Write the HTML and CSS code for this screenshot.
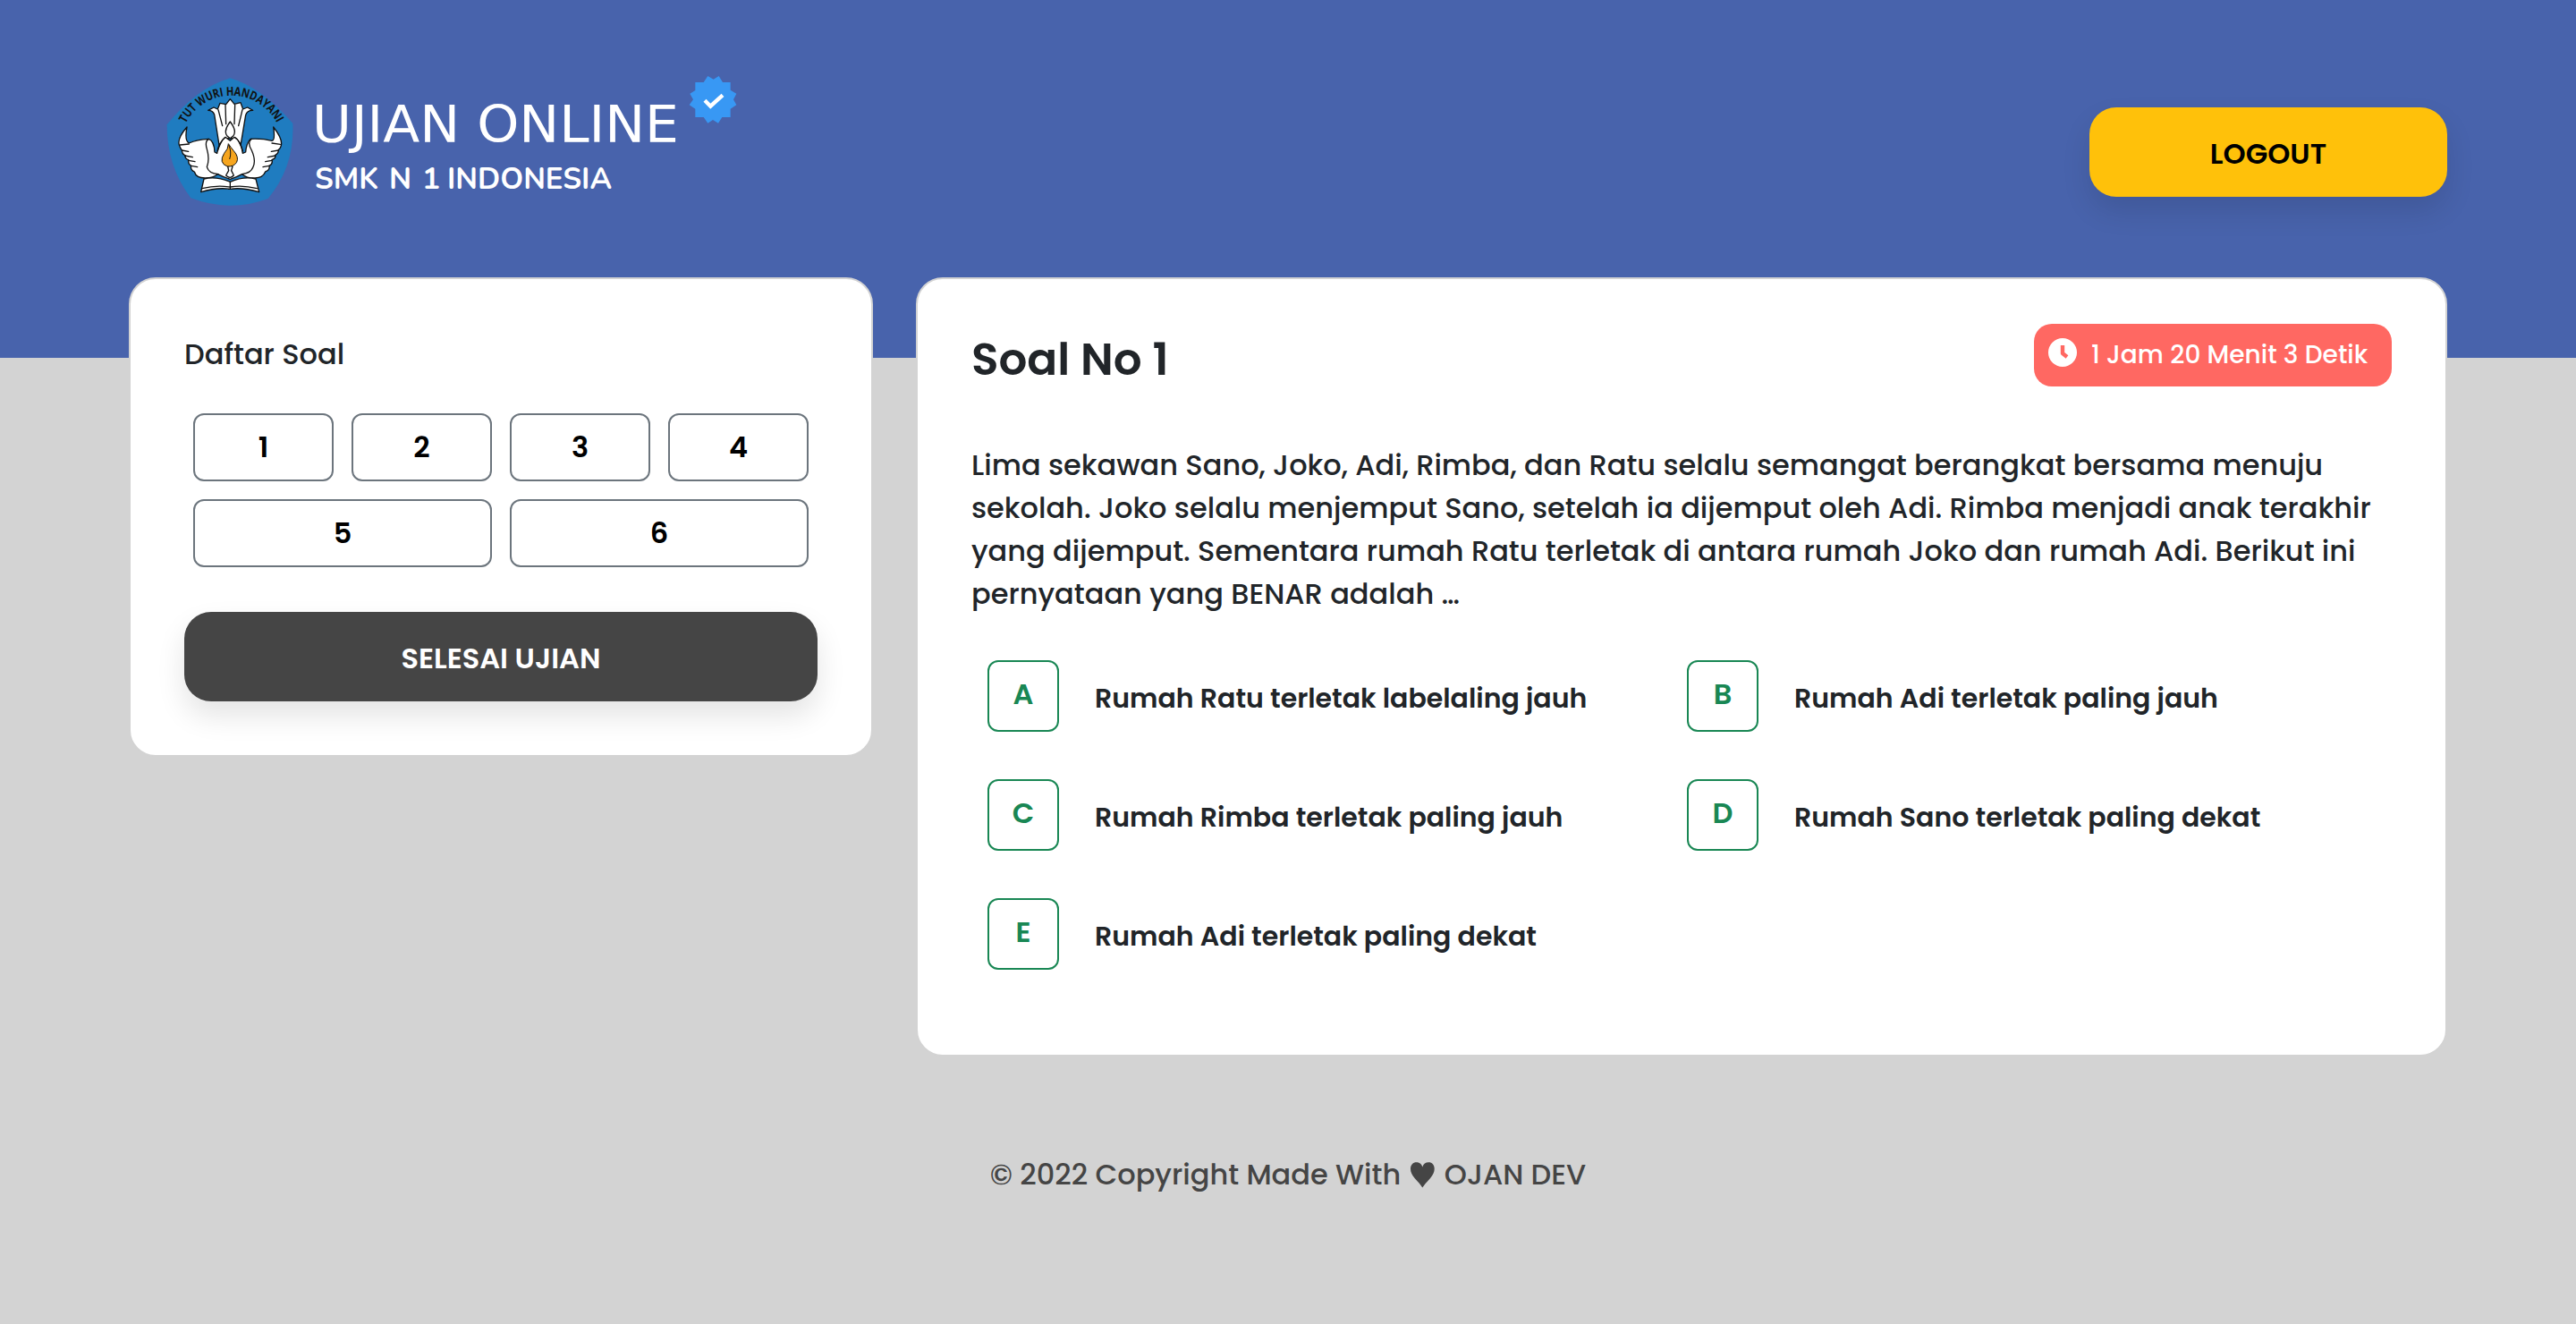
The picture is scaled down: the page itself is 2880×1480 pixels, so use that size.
FILE: index.html
```html
<!DOCTYPE html>
<html lang="id">
<head>
<meta charset="utf-8">
<title>Ujian Online - SMK N 1 Indonesia</title>
<link rel="stylesheet" href="styles.css">
</head>
<body>
<header class="header">
  <svg class="brand" width="660" height="170" viewBox="0 0 660 170" role="img" aria-label="Ujian Online SMK N 1 Indonesia">
    <!-- school emblem -->
    <g transform="scale(.33333)">
      <path fill="#1f7cc0" d="M262 52Q366 82 472 204Q478 350 389 456Q262 504 130 454Q50 350 50 208Q150 84 262 52Z"/>
      <defs><path id="motto" d="M113 204A172 172 0 0 1 424 214"/></defs>
      <text class="motto"><textPath href="#motto" textLength="376" lengthAdjust="spacingAndGlyphs">TUT WURI HANDAYANI</textPath></text>
      <g fill="#fff" stroke="#111" stroke-width="4" stroke-linejoin="round" stroke-linecap="round">
        <path d="M188 160L207 150L220 156L228 136L248 140L262 122L276 139L297 134L305 156L320 150L338 160Q318 160 314 176L297 278Q262 230 225 276L209 174Q204 160 188 160Z"/>
        <path fill="none" d="M222 158L236 212M246 142L248 206M278 142L276 206M303 158L290 212"/>
        <path d="M117 216Q84 254 91 276Q96 290 100 293Q101 308 111 311Q110 322 122 326Q120 340 131 346Q128 360 142 366Q148 388 180 387Q206 386 220 374Q240 384 262 391Q284 384 302 374Q318 388 346 387Q372 386 380 366Q396 360 393 346Q406 340 402 326Q416 322 413 310Q424 306 424 292Q432 288 434 272Q434 250 407 216Q414 260 402 262Q370 254 330 256Q316 272 314 300L304 304Q300 262 276 250L262 262L246 250Q222 270 218 304L210 300Q208 262 190 256Q150 258 124 270Q108 262 117 216Z"/>
        <path fill="none" d="M190 256Q176 264 184 290Q194 324 184 350Q190 372 222 374M334 256Q318 268 334 294Q350 330 338 352Q332 370 302 374M94 276L124 273M100 294L122 298M110 312L136 317M122 328L144 332M131 346L152 350M430 274L402 270M424 294L400 298M414 312L388 317M402 328L380 332M393 346L372 350M220 296Q232 260 244 252M304 296Q292 260 280 252"/>
        <path d="M262 198Q238 230 252 246L262 254L272 246Q286 230 262 198Z"/>
        <path d="M254 348Q262 342 270 348L266 362L274 378Q262 392 248 378L257 362Z"/>
        <path d="M174 390Q216 380 262 400Q308 380 348 390L359 434Q304 418 262 424Q216 418 164 434Z"/>
        <path fill="none" d="M262 400V424M168 422Q214 410 262 417Q304 410 352 422"/>
      </g>
      <path fill="#f6a51e" stroke="#111" stroke-width="3" d="M256 272Q256 290 242 304Q222 336 252 348Q274 350 284 334Q292 316 274 296Q264 284 256 272Z"/>
      <path fill="none" stroke="#111" stroke-width="3" d="M257 276Q268 300 260 324"/>
    </g>
    <text class="brand-name" x="179" y="89" textLength="410" lengthAdjust="spacingAndGlyphs">UJIAN ONLINE</text>
    <text class="brand-school" y="141"><tspan x="182" textLength="71" lengthAdjust="spacingAndGlyphs">SMK</tspan> <tspan x="265">N</tspan> <tspan x="302">1</tspan> <tspan x="330" textLength="184" lengthAdjust="spacingAndGlyphs">INDONESIA</tspan></text>
    <!-- verified badge -->
    <g transform="translate(160 0) scale(.33333)">
      <path fill="#3898f4" d="M1384 45L1403 56L1421 45L1434 66H1460V92L1480 104L1470 124L1480 142L1460 155V183H1432L1419 203L1401 192L1384 203L1370 183H1342V155L1322 142L1335 124L1324 104L1342 93V66H1370Z"/>
      <path fill="none" stroke="#fff" stroke-width="13" d="M1374 127L1393 146L1434 109"/>
    </g>
  </svg>
  <a class="btn btn-logout">LOGOUT</a>
</header>
<main class="content">
  <aside class="card list-card">
    <h2 class="list-title">Daftar Soal</h2>
    <nav class="numbers">
      <a class="number">1</a><a class="number">2</a><a class="number">3</a><a class="number">4</a>
      <a class="number wide">5</a><a class="number wide">6</a>
    </nav>
    <a class="btn btn-finish">SELESAI UJIAN</a>
  </aside>
  <section class="card question-card">
    <div class="question-head">
      <h1 class="question-title">Soal No 1</h1>
      <div class="timer">
        <svg width="32" height="32" viewBox="0 0 32 32"><circle cx="16" cy="16" r="16" fill="#fff"/><path d="M16 8v9l5 4" fill="none" stroke="#ff6862" stroke-width="4.4" stroke-linejoin="round"/></svg>
        <span>1 Jam 20 Menit 3 Detik</span>
      </div>
    </div>
    <p class="question">Lima sekawan Sano, Joko, Adi, Rimba, dan Ratu selalu semangat berangkat bersama menuju sekolah. Joko selalu menjemput Sano, setelah ia dijemput oleh Adi. Rimba menjadi anak terakhir yang dijemput. Sementara rumah Ratu terletak di antara rumah Joko dan rumah Adi. Berikut ini pernyataan yang BENAR adalah …</p>
    <div class="options">
      <label class="option"><span class="key">A</span><span class="answer">Rumah Ratu terletak labelaling jauh</span></label>
      <label class="option"><span class="key">B</span><span class="answer">Rumah Adi terletak paling jauh</span></label>
      <label class="option"><span class="key">C</span><span class="answer">Rumah Rimba terletak paling jauh</span></label>
      <label class="option"><span class="key">D</span><span class="answer">Rumah Sano terletak paling dekat</span></label>
      <label class="option"><span class="key">E</span><span class="answer">Rumah Adi terletak paling dekat</span></label>
    </div>
  </section>
</main>
<footer class="footer">© 2022 Copyright Made With <svg class="heart" width="32" height="32" viewBox="0 0 32 32"><path fill="#454545" d="M16.3 31.5Q13 26.500 8 21.500C4.500 17.500 3 14 3 10.500C3 6 6 3.300 9.500 3.300C12.500 3.300 15.500 5.200 16.300 8.500C17.200 5.200 20 3.300 23.200 3.300C27 3.300 29.700 6 29.700 10.500C29.700 14 28.200 17.500 24.700 21.500Q19.800 26.500 16.300 31.500Z"/></svg> OJAN DEV</footer>
</body>
</html>
```
FILE: styles.css
```css
* {
  box-sizing: border-box;
}

body {
  margin: 0;
  min-height: 1480px;
  padding: 0 144px;
  background: linear-gradient(#4863ac 400px, #d3d3d3 400px);
  color: #212529;
  font: 500 32px/48px "Poppins", "Inter", sans-serif;
}

.header {
  display: flex;
  justify-content: space-between;
  align-items: flex-start;
  height: 310px;
  padding-top: 70px;
}

.brand {
  display: block;
  margin-left: 26px;
}

.brand text {
  fill: #fff;
}

.brand .motto {
  fill: #111;
  font: 700 41px "Open Sans", sans-serif;
}

.brand-name {
  font: 57.6px "DejaVu Sans", sans-serif;
}

.brand-school {
  font: 700 33.5px "Nunito", "Lato", sans-serif;
}

.btn {
  display: block;
  height: 100px;
  padding: 28px 0 24px;
  border-radius: 30px;
  font-weight: 600;
  text-align: center;
  box-shadow: 0 16px 32px rgba(0, 0, 0, .11);
}

.btn-logout {
  width: 400px;
  margin-top: 50px;
  background: #ffc10a;
  color: #000;
}

.btn-finish {
  margin-top: 40px;
  background: #454545;
  color: #fff;
}

.content {
  display: grid;
  grid-template-columns: 832px 1712px;
  gap: 48px;
  align-items: start;
}

.card {
  padding: 60px;
  border: 2px solid #d3d3d3;
  border-radius: 30px;
  background: #fff;
}

.list-title {
  margin: 0 0 32px;
  font-size: 32px;
  font-weight: 500;
}

.numbers {
  display: grid;
  grid-template-columns: repeat(4, 1fr);
  gap: 20px;
  padding: 10px;
}

.number {
  padding: 12px 0;
  border: 2px solid #6c757d;
  border-radius: 12px;
  color: #000;
  font-weight: 600;
  text-align: center;
}

.wide {
  grid-column: span 2;
}

.question-card {
  height: 871px;
  padding-top: 50px;
}

.question-head {
  display: flex;
  justify-content: space-between;
  height: 134px;
}

.question-title {
  margin: 10px 0 0;
  font-size: 50px;
  font-weight: 600;
  line-height: 60px;
}

.timer {
  display: flex;
  gap: 16px;
  width: 400px;
  height: 70px;
  padding: 14px 16px 0;
  border-radius: 20px;
  background: #ff6862;
  color: #fff;
  font-size: 28px;
  line-height: 42px;
  white-space: nowrap;
}

.timer svg {
  margin-top: 2px;
}

.question {
  margin: 0;
}

.options {
  display: grid;
  grid-template-columns: 782px 1fr;
  row-gap: 53px;
  padding: 50px 18px 0;
}

.option {
  display: flex;
  gap: 40px;
}

.key {
  width: 80px;
  height: 80px;
  padding-top: 12px;
  border: 2px solid #198754;
  border-radius: 12px;
  color: #198754;
  font-weight: 600;
  text-align: center;
}

.answer {
  padding-top: 20px;
  font-size: 30px;
  font-weight: 600;
  line-height: 45px;
}

.footer {
  padding-top: 108px;
  color: #454545;
  text-align: center;
}

.heart {
  vertical-align: -4px;
}
```
